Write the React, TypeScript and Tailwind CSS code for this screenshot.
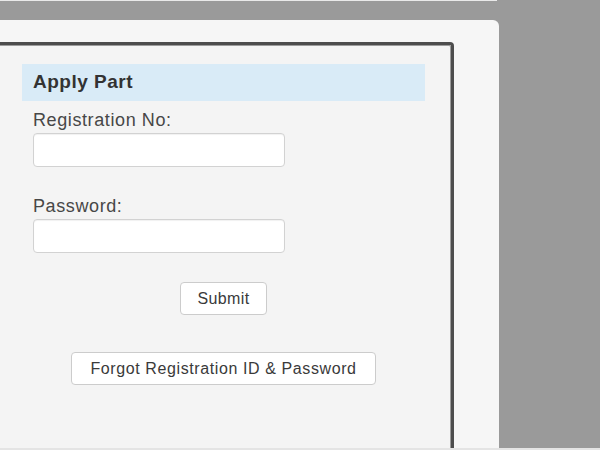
import React from "react";

const font = { fontFamily: '"Liberation Sans", Arial, sans-serif' };

function Field({ label, gap }: { label: string; gap: string }) {
  return (
    <div className={gap}>
      <label className="block h-[22px] text-[18px] leading-[18px] tracking-[0.6px] text-[#474747]">
        {label}
      </label>
      <input
        type="text"
        className="block h-[34px] w-[252px] rounded-[4px] border border-[#d2d2d2] bg-white shadow-[inset_0_1px_1px_rgba(0,0,0,0.06)] outline-none"
      />
    </div>
  );
}

export default function App() {
  return (
    <div
      className="flex h-[450px] w-[600px] flex-col overflow-hidden bg-[#9a9a9a]"
      style={font}
    >
      <div className="h-px w-[497px] bg-[#e9e9e9]" />
      <div className="mt-[19px] flex w-[499px] flex-1 flex-col rounded-tr-[6px] bg-[#f6f6f6] pt-[22px]">
        <div className="ml-[-10px] w-[464px] flex-1 rounded-tr-[4px] border-t-[3px] border-r-[3px] border-[#4d4d4d] bg-[#f4f4f4] shadow-[inset_-1px_1px_0_#9c9c9c]">
          <div className="ml-[32px] mt-[19px] flex h-[37px] w-[403px] items-center bg-[#d9ebf7] pl-[11px] text-[19px] font-bold tracking-[0.5px] text-[#333]">
            Apply Part
          </div>
          <div className="ml-[43px]">
            <Field label="Registration No:" gap="mt-[10px]" />
            <Field label="Password:" gap="mt-[30px]" />
            <div className="mt-[29px] flex w-[381px] flex-col items-center">
              <button className="h-[33px] w-[87px] rounded-[4px] border border-[#cccccc] bg-white text-[16px] tracking-[0.4px] text-[#3a3a3a]">
                Submit
              </button>
              <button className="mt-[37px] h-[33px] w-[305px] rounded-[4px] border border-[#cccccc] bg-white text-[16px] tracking-[0.6px] text-[#3a3a3a]">
                Forgot Registration ID &amp; Password
              </button>
            </div>
          </div>
        </div>
      </div>
      <div className="h-[2px] w-full bg-[#e4e4e4]" />
    </div>
  );
}
